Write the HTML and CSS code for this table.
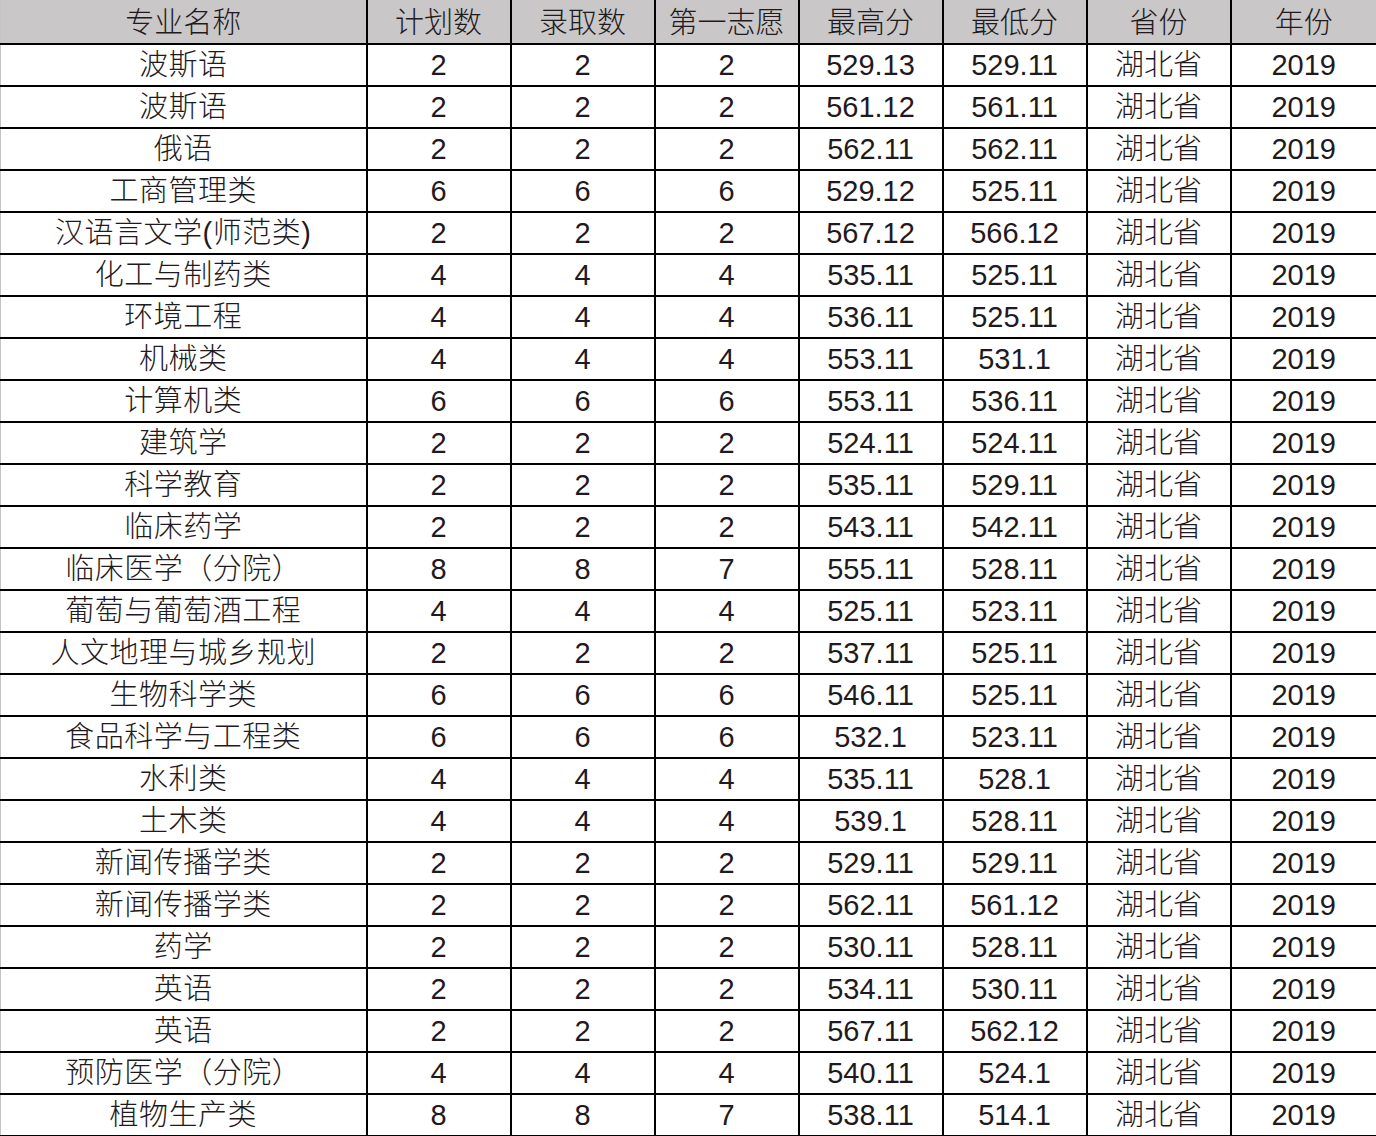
FILE: index.html
```html
<!DOCTYPE html>
<html lang="zh-CN">
<head>
<meta charset="utf-8">
<title>录取分数</title>
<link rel="stylesheet" href="styles.css">
</head>
<body>
<table class="scores">
<colgroup>
<col class="c-name"><col class="c-num"><col class="c-num"><col class="c-num"><col class="c-num"><col class="c-num"><col class="c-num"><col class="c-last">
</colgroup>
<thead>
<tr><th>专业名称</th><th>计划数</th><th>录取数</th><th>第一志愿</th><th>最高分</th><th>最低分</th><th>省份</th><th>年份</th></tr>
</thead>
<tbody>
<tr><td>波斯语</td><td>2</td><td>2</td><td>2</td><td>529.13</td><td>529.11</td><td>湖北省</td><td>2019</td></tr>
<tr><td>波斯语</td><td>2</td><td>2</td><td>2</td><td>561.12</td><td>561.11</td><td>湖北省</td><td>2019</td></tr>
<tr><td>俄语</td><td>2</td><td>2</td><td>2</td><td>562.11</td><td>562.11</td><td>湖北省</td><td>2019</td></tr>
<tr><td>工商管理类</td><td>6</td><td>6</td><td>6</td><td>529.12</td><td>525.11</td><td>湖北省</td><td>2019</td></tr>
<tr><td>汉语言文学(师范类)</td><td>2</td><td>2</td><td>2</td><td>567.12</td><td>566.12</td><td>湖北省</td><td>2019</td></tr>
<tr><td>化工与制药类</td><td>4</td><td>4</td><td>4</td><td>535.11</td><td>525.11</td><td>湖北省</td><td>2019</td></tr>
<tr><td>环境工程</td><td>4</td><td>4</td><td>4</td><td>536.11</td><td>525.11</td><td>湖北省</td><td>2019</td></tr>
<tr><td>机械类</td><td>4</td><td>4</td><td>4</td><td>553.11</td><td>531.1</td><td>湖北省</td><td>2019</td></tr>
<tr><td>计算机类</td><td>6</td><td>6</td><td>6</td><td>553.11</td><td>536.11</td><td>湖北省</td><td>2019</td></tr>
<tr><td>建筑学</td><td>2</td><td>2</td><td>2</td><td>524.11</td><td>524.11</td><td>湖北省</td><td>2019</td></tr>
<tr><td>科学教育</td><td>2</td><td>2</td><td>2</td><td>535.11</td><td>529.11</td><td>湖北省</td><td>2019</td></tr>
<tr><td>临床药学</td><td>2</td><td>2</td><td>2</td><td>543.11</td><td>542.11</td><td>湖北省</td><td>2019</td></tr>
<tr><td>临床医学（分院）</td><td>8</td><td>8</td><td>7</td><td>555.11</td><td>528.11</td><td>湖北省</td><td>2019</td></tr>
<tr><td>葡萄与葡萄酒工程</td><td>4</td><td>4</td><td>4</td><td>525.11</td><td>523.11</td><td>湖北省</td><td>2019</td></tr>
<tr><td>人文地理与城乡规划</td><td>2</td><td>2</td><td>2</td><td>537.11</td><td>525.11</td><td>湖北省</td><td>2019</td></tr>
<tr><td>生物科学类</td><td>6</td><td>6</td><td>6</td><td>546.11</td><td>525.11</td><td>湖北省</td><td>2019</td></tr>
<tr><td>食品科学与工程类</td><td>6</td><td>6</td><td>6</td><td>532.1</td><td>523.11</td><td>湖北省</td><td>2019</td></tr>
<tr><td>水利类</td><td>4</td><td>4</td><td>4</td><td>535.11</td><td>528.1</td><td>湖北省</td><td>2019</td></tr>
<tr><td>土木类</td><td>4</td><td>4</td><td>4</td><td>539.1</td><td>528.11</td><td>湖北省</td><td>2019</td></tr>
<tr><td>新闻传播学类</td><td>2</td><td>2</td><td>2</td><td>529.11</td><td>529.11</td><td>湖北省</td><td>2019</td></tr>
<tr><td>新闻传播学类</td><td>2</td><td>2</td><td>2</td><td>562.11</td><td>561.12</td><td>湖北省</td><td>2019</td></tr>
<tr><td>药学</td><td>2</td><td>2</td><td>2</td><td>530.11</td><td>528.11</td><td>湖北省</td><td>2019</td></tr>
<tr><td>英语</td><td>2</td><td>2</td><td>2</td><td>534.11</td><td>530.11</td><td>湖北省</td><td>2019</td></tr>
<tr><td>英语</td><td>2</td><td>2</td><td>2</td><td>567.11</td><td>562.12</td><td>湖北省</td><td>2019</td></tr>
<tr><td>预防医学（分院）</td><td>4</td><td>4</td><td>4</td><td>540.11</td><td>524.1</td><td>湖北省</td><td>2019</td></tr>
<tr><td>植物生产类</td><td>8</td><td>8</td><td>7</td><td>538.11</td><td>514.1</td><td>湖北省</td><td>2019</td></tr>
</tbody>
</table>
</body>
</html>
```
FILE: styles.css
```css
html, body {
  margin: 0;
  padding: 0;
  background: #ffffff;
}

.scores {
  width: 1376px;
  table-layout: fixed;
  border-collapse: collapse;
  font-family: "Liberation Sans", "Noto Sans CJK SC", sans-serif;
  font-size: 29px;
  font-weight: 300;
  color: #1f1a20;
}

.c-name { width: 366px; }
.c-num { width: 144px; }
.c-last { width: 146px; }

.scores th,
.scores td {
  padding: 0;
  text-align: center;
  vertical-align: middle;
  white-space: nowrap;
  line-height: 1;
  border: 2px solid #000000;
}

.scores th {
  height: 40px;
  padding-top: 3px;
  font-weight: 300;
  background: #c9c7c8;
  border-top: none;
}

.scores td {
  height: 40px;
}

.scores td:first-child {
  letter-spacing: 0.5px;
}

.scores th:first-child,
.scores td:first-child {
  border-left: 1px solid #c4c4c4;
}

.scores th:last-child,
.scores td:last-child {
  border-right: 1px solid #c4c4c4;
}
```
